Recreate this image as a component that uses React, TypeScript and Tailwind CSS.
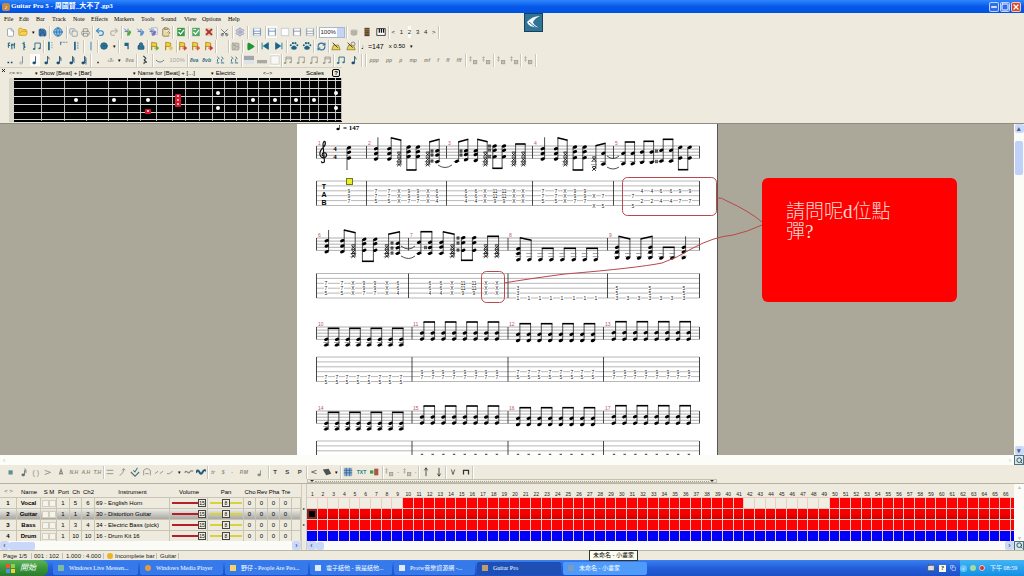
import type { ReactNode } from 'react'
import {
  CircleDot, Copy, ClipboardPaste, File, FolderOpen, Globe, Image, Keyboard, Lock, Minus, Play,
  Printer, Redo2, RefreshCw, Save, Scissors, Search, Settings, Square, Undo2, X
} from 'lucide-react'

const SANS = "font-['Liberation_Sans','Noto_Sans_CJK_TC',sans-serif]"
const SERIF = "font-['Liberation_Serif','Noto_Sans_CJK_TC',serif]"

/* ---------- toolbar glyphs, all on a 12 unit grid ---------- */

function Glyph({ children }: { children: ReactNode }) {
  return <svg viewBox="0 0 12 12" className="size-[10px]" fill="none">{children}</svg>
}

function NoteGlyph({ flags = 0, open = false, color = '#1c4a6e', small = false }: {
  flags?: number; open?: boolean; color?: string; small?: boolean
}) {
  return (
    <Glyph>
      <ellipse cx="5" cy="9.5" rx="1.8" ry="1.3" fill={open ? 'none' : color} stroke={color} strokeWidth="0.7" />
      <path d={small ? 'M6.6 9.3V4' : 'M6.6 9.3V1.5'} stroke={color} />
      {Array.from({ length: flags }, (_, i) => (
        <path key={i} d={`M6.6 ${1.8 + i * 2}q2.6 1.2 1.8 3.6`} stroke={color} strokeWidth="0.9" />
      ))}
    </Glyph>
  )
}

function BeamGlyph({ color = '#9c9a8e', double = false }: { color?: string; double?: boolean }) {
  return (
    <Glyph>
      <path d="M3.5 9.5V2.5H10V8.5" stroke={color} strokeWidth="1.1" />
      {double && <path d="M3.5 4.5H10" stroke={color} />}
      <ellipse cx="2.5" cy="9.6" rx="1.5" ry="1.1" fill={color} />
      <ellipse cx="9" cy="8.8" rx="1.5" ry="1.1" fill={color} />
    </Glyph>
  )
}

function FlagGlyph({ arrow }: { arrow?: string }) {
  return (
    <Glyph>
      <path d="M2 11V1.5L8 2.5V6.5H2z" fill="#f4d23c" stroke="#a77b12" strokeWidth="0.9" />
      {arrow && <path d="M5 8.5H9M7.5 6L10.5 8.5L7.5 11z" stroke={arrow} fill={arrow} />}
    </Glyph>
  )
}

function PageGlyph({ rows = 0, color = '#6287b3' }: { rows?: number; color?: string }) {
  return (
    <Glyph>
      <rect x="1.5" y="1.5" width="9" height="9" fill="#fff" stroke="#bfc7d0" />
      <path d="M2 2V10M10 2V10" stroke={color} />
      {rows > 0 && <path d="M2 5H10" stroke={color} />}
      {rows > 1 && <path d="M2 8H10" stroke={color} />}
    </Glyph>
  )
}

function DocGlyph({ color, cross = false }: { color: string; cross?: boolean }) {
  return (
    <Glyph>
      <rect x="1.5" y="1" width="9" height="10" fill={color} />
      {cross
        ? <path d="M2.5 2.5L9.5 9.5M9.5 2.5L2.5 9.5" stroke="#c42a20" strokeWidth="2.4" />
        : <path d="M3 6L5.5 8.5L9.5 3.5M3 3H6" stroke="#fff" strokeWidth="1.4" />}
    </Glyph>
  )
}

function GuitarGlyph({ color, sheet = false }: { color: string; sheet?: boolean }) {
  return (
    <Glyph>
      {sheet && <rect x="4" y="1" width="7" height="8" fill="#eef2f8" stroke="#8b9bb8" strokeWidth="0.7" />}
      <path d="M1.5 2L5 5.5M2 5.5h4V2" stroke="#5a7fb4" strokeWidth="1.2" />
      <path d="M5 7l3-3 2 2-2 4-3 .8z" fill={color} />
    </Glyph>
  )
}

function StaffGlyph({ variant }: { variant: number }) {
  return (
    <Glyph>
      <path d={variant === 1 ? 'M2 1V5' : 'M3.5 1V11'} stroke="#1c5f86" strokeWidth={variant === 1 ? 1 : 2} />
      {variant === 0 && <path d="M6 2H8M6 5H8M6 8H8" stroke="#8aa5b8" />}
      {variant === 1 && <path d="M2 1.5H11" stroke="#557b93" strokeDasharray="2 1" />}
      {variant === 2 && <path d="M7 1.5V10.5" stroke="#40799a" strokeDasharray="2 1" />}
    </Glyph>
  )
}

function PawGlyph() {
  return (
    <Glyph>
      <path d="M3 7.5Q6 3.5 9 7.5Q10 10.5 6 10.5Q2 10.5 3 7.5z" fill="#1b6286" />
      <circle cx="2.2" cy="5" r="1.2" fill="#1b6286" />
      <circle cx="4.7" cy="2.6" r="1.3" fill="#1b6286" />
      <circle cx="7.7" cy="2.6" r="1.3" fill="#1b6286" />
      <circle cx="10" cy="5" r="1.2" fill="#1b6286" />
    </Glyph>
  )
}

function SkipGlyph({ back = false }: { back?: boolean }) {
  return (
    <Glyph>
      <path d={back ? 'M2.5 2V10M10 2L4 6L10 10z' : 'M9.5 2V10M2 2L8 6L2 10z'} fill="#14648c" stroke="#14648c" />
    </Glyph>
  )
}

function MetronomeGlyph({ clock = false }: { clock?: boolean }) {
  return (
    <Glyph>
      <path d="M1 10.5L3 5h6l2 5.5z" fill="#ead24a" stroke="#76682a" strokeWidth="0.8" />
      <path d="M2 2L8 8" stroke="#4d4936" strokeWidth="1.2" />
      {clock && <circle cx="8.5" cy="3.5" r="2.4" fill="#dfe0d3" stroke="#6d6a58" strokeWidth="0.8" />}
    </Glyph>
  )
}

function Stems({ color = '#2b6a86' }: { color?: string }) {
  return (
    <Glyph>
      <path d="M3 2L5 5M8 2L10 5M3 5V8M8 5V8M2 9.5h3M7 9.5h4" stroke={color} strokeWidth="1.1" />
    </Glyph>
  )
}

/** strum buttons: stem at the left, boxed letter low at the right */
function StrumGlyph() {
  return (
    <Glyph>
      <path d="M3 1.5V8M1.5 3H4.5M1.5 6H4.5" stroke="#b0aea2" />
      <rect x="6.5" y="6.5" width="4" height="4" fill="#c4c2b6" stroke="#a09e92" />
    </Glyph>
  )
}

function Line({ d, color = '#8b897c', w = 1 }: { d: string; color?: string; w?: number }) {
  return <Glyph><path d={d} stroke={color} strokeWidth={w} /></Glyph>
}

function Txt({ children, tone = 'text-[#8f8d80]' }: { children: ReactNode; tone?: string }) {
  return <span className={`${tone} text-[5px] font-bold italic`}>{children}</span>
}

const caret = <span className="text-[5px] text-black">▾</span>

type Tool = [label: string, icon: ReactNode, pressed?: boolean]

function Group({ w, tools, children }: { w: string; tools?: Tool[]; children?: ReactNode }) {
  return (
    <div className={`flex h-[13px] shrink-0 items-center justify-around border-r border-[#cbc8b9] shadow-[1px_0_0_#fff] ${w}`}>
      {tools?.map(([label, icon, pressed]) => (
        <button
          key={label}
          type="button"
          title={label}
          aria-label={label}
          className={`flex h-3 items-center justify-center ${pressed ? 'bg-white/80' : ''}`}
        >
          {icon}
        </button>
      ))}
      {children}
    </div>
  )
}

const row1: [string, Tool[]][] = [
  ['w-[46px]', [
    ['New', <File size={9} fill="#fff" color="#8291a5" />],
    ['Open', <FolderOpen size={10} fill="#f7d64e" color="#c79b25" />],
    ['Recent files', caret],
    ['Save', <Save size={9} fill="#3d78b5" color="#1f4f84" />]
  ]],
  ['w-[17px]', [['Browser', <Globe size={10} fill="#8fc2e8" color="#2b70ac" />]]],
  ['w-[26px]', [
    ['Score information', <Copy size={9} color="#7f8ca0" />],
    ['Print', <Printer size={9} color="#7f807a" />]
  ]],
  ['w-[29px]', [
    ['Undo', <Undo2 size={10} color="#3e8fce" strokeWidth={3} />],
    ['Redo', <Redo2 size={10} color="#b9b8ae" strokeWidth={3} />]
  ]],
  ['w-[51px]', [
    ['Add track', <GuitarGlyph color="#4cab45" />],
    ['Track properties', <GuitarGlyph color="#5c95cf" />],
    ['Move track', <GuitarGlyph color="#7d6fbc" sheet />],
    ['Paste', <ClipboardPaste size={10} fill="#eadb9d" color="#857a54" />]
  ]],
  ['w-[16px]', [['Insert bar', <DocGlyph color="#38994a" />]]],
  ['w-[28px]', [
    ['Add bar', <DocGlyph color="#55a862" />],
    ['Delete bar', <DocGlyph color="#cdd8c4" cross />]
  ]],
  ['w-[16px]', [['Cut', <Scissors size={9} color="#4c5866" className="-rotate-90" />]]],
  ['w-[15px]', [['Preferences', <Settings size={10} fill="#c9cbe2" color="#9697ba" />]]],
  ['w-[18px]', [['Screen mode', <PageGlyph rows={2} />]]],
  ['w-[51px]', [
    ['Page', <PageGlyph rows={1} />, true],
    ['Parchment', <PageGlyph color="#d5dce4" />],
    ['Vertical', <PageGlyph rows={1} color="#7d89a0" />],
    ['Horizontal', <PageGlyph rows={2} color="#8f99ab" />]
  ]]
]

const row2: [string, Tool[]][] = [
  ['w-[40px]', [
    ['Key signature', <Line d="M2 3L5 2M2 6L5 5M3 2V8M7 3V10M10 2V9M6 5L11 4" color="#2d6b86" w={1.3} />],
    ['Clef', <Line d="M6 1V11M4 3Q8 3 6 6Q9 7 5 9" color="#2d6b86" w={1.3} />],
    ['Triplet feel', <BeamGlyph color="#2d6b86" />]
  ]],
  ['w-[40px]', [
    ['Open repeat', <StaffGlyph variant={0} />],
    ['Alternate ending', <StaffGlyph variant={1} />],
    ['Close repeat', <StaffGlyph variant={2} />]
  ]],
  ['w-[14px]', [['Double bar', <Line d="M6 1V11" color="#4d90b8" w={1.4} />]]],
  ['w-[21px]', [
    ['Coda', <CircleDot size={8} fill="#2b7496" color="#17506f" />],
    ['Direction list', caret]
  ]],
  ['w-[29px]', [
    ['Line break', <Glyph><path d="M3 2H8V10H6.5V6H3z" fill="#1c6488" /></Glyph>],
    ['Lock', <Lock size={8} fill="#2b7496" color="#17506f" />]
  ]],
  ['w-[29px]', [
    ['Insert marker', <FlagGlyph arrow="#6aa82b" />],
    ['Marker list', <FlagGlyph arrow="#e8c243" />]
  ]],
  ['w-[39px]', [
    ['First marker', <FlagGlyph arrow="#d6402a" />],
    ['Previous marker', <FlagGlyph arrow="#e0532a" />],
    ['Next marker', <FlagGlyph arrow="#c9302a" />]
  ]],
  ['w-[13px]', []],
  ['w-[14px]', [['RSE', <Image size={9} fill="#c8c6ba" color="#99978b" />]]],
  ['w-[15px]', [['Play', <Play size={9} fill="#1f9a32" color="#13801f" />]]],
  ['w-[29px]', [
    ['First bar', <SkipGlyph back />],
    ['Last bar', <SkipGlyph />]
  ]],
  ['w-[27px]', [
    ['Previous bar', <PawGlyph />],
    ['Next bar', <PawGlyph />]
  ]],
  ['w-[15px]', [['Loop', <RefreshCw size={9} color="#2a6fa0" strokeWidth={3} />]]],
  ['w-[30px]', [
    ['Metronome', <MetronomeGlyph />],
    ['Count down', <MetronomeGlyph clock />]
  ]]
]

const row3: [string, Tool[]][] = [
  ['w-[87px]', [
    ['Whole', <Line d="M3 9H5M7 9H9" color="#1c4a6e" w={1.6} />],
    ['Half', <NoteGlyph open color="#6f8798" />],
    ['Quarter', <NoteGlyph />, true],
    ['Eighth', <NoteGlyph flags={1} />],
    ['Sixteenth', <NoteGlyph flags={2} />],
    ['Thirty-second', <NoteGlyph flags={3} />],
    ['Sixty-fourth', <NoteGlyph flags={4} />]
  ]],
  ['w-[46px]', [
    ['Dotted', <Line d="M5 9H7" color="#333" w={1.6} />],
    ['Tuplet', <Txt>‹3›</Txt>],
    ['Tuplet list', caret],
    ['Octave', <Txt>8va</Txt>]
  ]],
  ['w-[16px]', [['Rest', <Line d="M4 1L7 4L5 6L8 9Q4 7 5 11" color="#2c3c48" w={1.3} />]]],
  ['w-[35px]', [
    ['Tie', <Line d="M1 6Q6 11 11 6" color="#5a6f80" />],
    ['Percent', <span className="text-[6px] text-[#a9a79b]">100%</span>]
  ]],
  ['w-[54px]', [
    ['Rhythm A', <Txt tone="text-[#2b6a86]">8va</Txt>],
    ['Rhythm B', <Txt tone="text-[#2b6a86]">8vb</Txt>],
    ['Stem up', <Stems />],
    ['Stem down', <Stems />]
  ]],
  ['w-[40px]', [
    ['Voice top', <Glyph><rect width="12" height="5" y="1" fill="#9fa6ad" /><rect width="12" height="5" y="6" fill="#dfe2e4" /></Glyph>],
    ['Voice bottom', <Glyph><rect width="12" height="4" y="6" fill="#a9a9a4" /></Glyph>],
    ['Voice none', <Glyph><rect x="1" y="1" width="10" height="10" fill="#f8f8f6" stroke="#c9c9c0" /></Glyph>, true]
  ]],
  ['w-[52px]', [
    ['Beam', <BeamGlyph double />],
    ['Unbeam', <BeamGlyph />],
    ['Split', <BeamGlyph />],
    ['Auto beam', <BeamGlyph double />]
  ]],
  ['w-[28px]', [
    ['Grace before', <BeamGlyph color="#2b6a86" />],
    ['Grace on', <NoteGlyph flags={1} />]
  ]],
  ['w-1', []],
  ['w-[100px]', ['ppp', 'pp', 'p', 'mp', 'mf', 'f', 'ff', 'fff'].map((s): Tool => [s, <Txt>{s}</Txt>])],
  ['w-[28px]', [
    ['Bass note', <StrumGlyph />],
    ['Treble note', <StrumGlyph />]
  ]],
  ['w-[27px]', [
    ['Strum down', <StrumGlyph />],
    ['Strum up', <StrumGlyph />]
  ]],
  ['w-[15px]', [['Arpeggio', <StrumGlyph />]]]
]

const effects: [string, Tool[]][] = [
  ['w-[100px]', [
    ['Dead note', <Glyph><rect x="3" y="4" width="5" height="5" fill="#5f8f96" /></Glyph>],
    ['Grace note', <NoteGlyph flags={2} color="#5d6f76" small />],
    ['Ghost note', <span className="text-[7px] text-[#8b897c]">( )</span>],
    ['Accent', <Line d="M2 4L9 6.5L2 9" />],
    ['Heavy accent', <Line d="M4 9L6 3L8 9M4.5 8H7.5" w={1.4} />],
    ['Natural harmonic', <Txt>N.H</Txt>],
    ['Artificial harmonic', <Txt>A.H</Txt>],
    ['Tapped harmonic', <Txt>T.H</Txt>]
  ]],
  ['w-[104px]', [
    ['Let ring', <Line d="M2 4H10M2 8H10" />],
    ['Bend', <Line d="M3 10Q8 8 8 2M6 4L8 2L10 4" />],
    ['Tremolo bar', <Line d="M1 6L6 11L11 6M4 4L6 6L9 1" color="#4e6e7c" w={1.3} />],
    ['Hammer on', <Line d="M2 10V4Q6 0 10 4V10M4 8H8" />],
    ['Slide', <Line d="M1 8L5 5M7 8L11 5" />],
    ['Shift slide', <Line d="M1 8H4L8 5" />],
    ['Slide list', caret],
    ['Vibrato', <Line d="M1 7Q2 4 4 6T7 6T11 5" w={1.5} />],
    ['Wide vibrato', <Line d="M0 7Q2 2 4 6T8 6T12 5" color="#215b7c" w={2.4} />]
  ]],
  ['w-[61px]', [
    ['Trill', <Txt>tr</Txt>],
    ['Tremolo picking', <Txt>$</Txt>],
    ['Speed', <Txt>-</Txt>],
    ['Palm mute', <Txt>P.M</Txt>],
    ['Staccato', <NoteGlyph color="#8b897c" small />]
  ]],
  ['w-[38px]', [
    ['Tapping', <span className="text-[6px] font-bold text-[#444]">T</span>],
    ['Slapping', <span className="text-[6px] font-bold text-[#444]">S</span>],
    ['Popping', <span className="text-[6px] font-bold text-[#444]">P</span>]
  ]],
  ['w-[34px]', [
    ['Fade in', <Line d="M9 4L3 6L9 8" color="#555" />],
    ['Wah wah', <Glyph><path d="M1 3L8 2L11 8L5 10z" fill="#4a5450" /></Glyph>],
    ['Wah list', caret]
  ]],
  ['w-[42px]', [
    ['Chord', <Glyph><rect x="1" y="1" width="10" height="10" fill="#8fb1d2" /><path d="M1 4H11M1 7H11M4 1V11M8 1V11" stroke="#2c5680" strokeWidth="0.8" /></Glyph>],
    ['Text', <span className="text-[5px] font-bold text-[#1e7f8c]">TXT</span>],
    ['Mix table', <Glyph><rect x="0" y="4" width="4" height="4" fill="#3f9b4a" /><rect x="5" y="2" width="5" height="8" fill="#a8564a" /></Glyph>]
  ]],
  ['w-[36px]', [
    ['Strum', <StrumGlyph />],
    ['Strum list', <Txt>-</Txt>],
    ['Rake', <StrumGlyph />],
    ['Rake list', <Txt>-</Txt>]
  ]],
  ['w-[27px]', [
    ['Up', <Line d="M6 11V1M4 4L6 1L8 4" color="#333" />],
    ['Down', <Line d="M6 1V11M4 8L6 11L8 8" color="#333" />]
  ]],
  ['w-[27px]', [
    ['Pick up', <Line d="M4 3L6 9L8 3" color="#444" />],
    ['Pick down', <Line d="M3 9V4H9V9" color="#333" w={1.5} />]
  ]]
]

function ToolRow({ groups, children }: { groups: [string, Tool[]][]; children?: ReactNode }) {
  return (
    <div className="flex h-[14px] items-center overflow-hidden pl-1">
      {groups.map(([w, tools], i) => <Group key={i} w={w} tools={tools} />)}
      {children}
    </div>
  )
}

/* ---------- fretboard ---------- */

const frets = [32, 55, 77, 99, 118, 131, 147, 163, 176, 190, 203, 215, 227, 238, 249, 260, 271, 281, 291, 300, 309, 318, 326, 332]
const strings = [2, 10, 18, 26, 34, 41]
const inlays = [[67, 22], [105, 22], [139, 22], [209, 15], [209, 30], [244, 22], [266, 22], [287, 22], [305, 22], [327, 15], [327, 30]]

function Fretboard() {
  return (
    <svg width="333" height="45" viewBox="0 0 333 45" className="block" aria-label="Fretboard">
      <rect width="333" height="45" fill="#000" />
      <rect width="5" height="45" fill="#d8d5c6" />
      {frets.map((x) => <path key={x} d={`M${x}.5 0V43`} stroke="#b9b9b9" />)}
      {strings.map((y) => <path key={y} d={`M0 ${y}.5H333`} stroke="#d6d6d6" />)}
      {inlays.map(([x, y]) => <circle key={`${x}-${y}`} cx={x} cy={y} r="2" fill="#fff" />)}
      {[[169, 18], [169, 22], [169, 26], [139, 33]].map(([x, y]) => (
        <g key={y}>
          <rect x={x - 3} y={y - 2} width="6" height="5" rx="1" fill="#d8182c" />
          <rect x={x - 1} y={y - 1} width="2" height="2" fill="#f6b3b3" />
        </g>
      ))}
      <path d="M0 44.5H333" stroke="#e8e5d8" />
    </svg>
  )
}

/* ---------- score ---------- */

type Stack = { ys: number[]; dead?: boolean }
type Beam = { a: number; b: number; from: Stack; to: Stack; y1: number; y2: number; down?: boolean }

const h = (...ys: number[]): Stack => ({ ys })
const m = (...ys: number[]): Stack => ({ ys, dead: true })
const pair = (a: number, from: Stack, b: number, to: Stack, y1: number, y2 = y1, down = false): Beam =>
  ({ a, b, from, to, y1, y2, down })

const chord1 = h(24.7, 29.5, 35)
const dead1 = m(30.5, 35.5, 40.5)
const chord2 = h(116.7, 122, 127.7)
const dead2 = m(123.3, 127.7, 132)

const system1: Beam[] = [
  pair(92.3, chord1, 102, dead1, 13.7, 16.3),
  pair(111.7, h(23, 27.7, 32.5), 121, h(23, 27.7, 32.5), 46, 46, true),
  pair(130.7, dead1, 140.3, h(26.7, 31, 37.7), 18, 15.3),
  pair(159.7, h(37.3), 169, h(26.7, 30.5, 35.7), 18, 15.3),
  pair(178.7, h(26.7, 30.5, 36.5), 188.3, dead1, 15.3, 17.7),
  pair(197.7, h(22, 26.3, 32.7), 207, h(22, 26.3, 32.7), 44.3, 44.3, true),
  pair(216.7, dead1, 226.3, dead1, 20),
  pair(259, chord1, 268.3, dead1, 13.7, 16.3),
  pair(278, h(23, 27.7, 33.7), 287.7, h(23, 27.7, 33.7), 46, 46, true),
  pair(297, m(35.3, 45), 306.3, h(29.3, 40), 21.7, 19.3),
  pair(326.3, h(29.3, 39.7), 335.7, h(29.3, 39.7), 18),
  pair(345, h(28, 38.3), 354.7, h(28, 38.3), 17.3),
  pair(364.3, h(26.3, 37), 374, h(26.3, 37), 15.3),
  pair(383.3, h(23.3, 34), 392.7, h(23.3, 34), 45.7, 45.7, true)
]

const system2: Beam[] = [
  pair(45.3, chord2, 56.3, dead2, 106, 108.7),
  pair(67.3, h(115.3, 119.7, 126.3), 78.3, h(115.3, 119.7, 126.3), 137.3, 137.3, true),
  pair(89.7, dead2, 100.7, h(119.3, 123.7, 129.3), 110.3, 107.7),
  pair(122, h(118.3, 129.3), 133, h(118.3, 123.5, 129.3), 107.7),
  pair(144.3, h(118.3, 123, 129.3), 155.3, dead2, 107.7, 110.3),
  pair(166.3, h(113.7, 118.7, 126.3), 177.3, h(113.7, 118.7, 126.3), 136.3, 136.3, true),
  pair(188.7, dead2, 199.7, dead2, 112.3),
  pair(221.3, h(124.7, 129.5, 135.7), 232.3, h(135.7), 113.7, 116.3),
  pair(243.3, h(135.7), 254.3, h(135.7), 124.3),
  pair(265.3, h(135.7), 276.7, h(135.7), 124.3),
  pair(287.7, h(135.7), 298.7, h(135.7), 124.3),
  pair(320, h(123.3, 128, 133.7), 331, h(134), 112.3, 115),
  pair(342, h(134), 353.3, h(123.3, 128, 133.7), 115, 112.3),
  pair(364.3, h(134), 375.3, h(134), 123.3)
]

const eighths = (x0: number, top: number, low: number, beam: number): Beam[] =>
  [0, 2, 4, 6].map((i) => pair(x0 + i * 10.7, h(top, low), x0 + (i + 1) * 10.7, h(top, low), beam))

const lowSystem = (dy: number): Beam[] => [
  ...eighths(29.3, 215.3 + dy, 220.9 + dy, 204.3 + dy),
  ...eighths(125, 209 + dy, 215 + dy, 198 + dy),
  ...eighths(221, 210.3 + dy, 216.5 + dy, 199.7 + dy),
  ...eighths(316.7, 208.7 + dy, 215.2 + dy, 197.7 + dy)
]

const DY = 84

const systems = [
  { staff: 22, tab: 57, bars: [19.5, 69.5, 149.5, 235.5, 316.5, 402.5], nums: [1, 2, 3, 4, 5], beams: system1 },
  { staff: 114, tab: 149.5, bars: [19.5, 111.5, 211, 310.5, 402.5], nums: [6, 7, 8, 9], beams: system2 },
  { staff: 203, tab: 233, bars: [19.5, 115, 211, 306.5, 402.5], nums: [10, 11, 12, 13], beams: lowSystem(0) },
  { staff: 287, tab: 317, bars: [19.5, 115, 211, 306.5, 402.5], nums: [14, 15, 16, 17], beams: lowSystem(DY) }
]

/** frets: stacked downwards from the given string line */
type Col = [x: number, line: number, frets: string[]]
const X3 = ['X', 'X', 'X']
const tab1: Col[] = [
  [52, 3, ['9', '9', '7']],
  [79, 3, ['7', '7', '5']], [92, 3, ['7', '7', '5']], [102, 3, X3], [112, 3, ['9', '9', '7']], [121, 3, ['9', '9', '7']], [131, 3, X3], [140, 3, ['6', '6', '4']],
  [169, 3, ['6', '6', '4']], [179, 3, ['6', '6', '4']], [188, 3, X3], [198, 3, ['11', '11', '9']], [207, 3, ['11', '11', '9']], [217, 3, X3], [226, 3, X3],
  [246, 3, ['7', '7', '5']], [259, 3, ['7', '7', '5']], [268, 3, X3], [278, 3, ['9', '9', '7']], [288, 3, ['9', '9', '7']],
  [297, 4, ['X', '', 'X']], [306, 4, ['7', '', '5']],
  [336, 4, ['7', '', '5']], [345, 3, ['4', '', '2']], [355, 3, ['4', '', '2']], [364, 3, ['6', '', '4']], [374, 3, ['6', '', '4']], [383, 3, ['9', '', '7']], [393, 3, ['9', '', '7']]
]
const tab2: Col[] = [
  [29, 3, ['7', '7', '5']], [45, 3, ['7', '7', '5']], [56, 3, X3], [67, 3, ['9', '9', '7']], [78, 3, ['9', '9', '7']], [90, 3, X3], [101, 3, ['6', '6', '4']],
  [133, 3, ['6', '6', '4']], [144, 3, ['6', '6', '4']], [155, 3, X3], [166, 3, ['11', '11', '9']], [177, 3, ['11', '11', '9']], [189, 3, X3], [200, 3, X3],
  [221, 4, ['3', '3', '1']], ...[232, 243, 254, 265, 277, 288, 299].map((x): Col => [x, 6, ['1']]),
  [320, 4, ['5', '5', '3']], [331, 6, ['3']], [342, 6, ['3']], [353, 4, ['5', '5', '3']], [364, 6, ['3']], [375, 6, ['3']], [387, 4, ['5', '5', '3']]
]
const run = (x0: number, line: number, f: string[]): Col[] =>
  Array.from({ length: 8 }, (_, i): Col => [Math.round(x0 + i * 10.7), line, f])
const tab3: Col[] = [
  ...run(29, 5, ['7', '5']), ...run(125, 4, ['9', '7']), ...run(221, 4, ['7', '5']), ...run(317, 4, ['9', '7'])
]

const tabs: [number, Col[]][] = [[57, tab1], [149.5, tab2], [233, tab3]]

const sharps = [
  [135, 27], [135, 31], [135, 37], [164, 27], [164, 31], [192.5, 22], [192.5, 26], [192.5, 32.5], [359.5, 27], [359.5, 37.5],
  [95, 119], [95, 124], [95, 129], [128.5, 123.5], [161, 114], [161, 119], [161, 126]
]
const ties = [
  'M141 41Q148 46 155 41', 'M310 32Q316 37 322 32', 'M310 43Q316 47 322 43',
  'M104 122Q112 128 118 122', 'M104 132Q112 137 118 132'
]

function Heads({ x, stack, bottom }: { x: number; stack: Stack; bottom: number }) {
  const ledgers = [bottom + 3.1, bottom + 6.2].filter((y) => stack.ys[stack.ys.length - 1] >= y - 0.8)
  return (
    <g>
      {ledgers.map((y) => <path key={y} d={`M${x - 3} ${y}h6`} stroke="#666" strokeWidth="0.6" />)}
      {stack.ys.map((y) => stack.dead
        ? <path key={y} d={`M${x - 1.9} ${y - 1.8}l3.8 3.6m0 -3.6l-3.8 3.6M${x - 1.6} ${y - 2.4}h3.2`} stroke="#111" strokeWidth="0.9" />
        : <ellipse key={y} cx={x} cy={y} rx="2.3" ry="1.5" transform={`rotate(-20 ${x} ${y})`} fill="#000" />)}
    </g>
  )
}

function BeamedPair({ beam, bottom }: { beam: Beam; bottom: number }) {
  const { a, b, from, to, y1, y2, down } = beam
  const off = down ? -1.9 : 1.9
  const start = (s: Stack) => (down ? s.ys[0] : s.ys[s.ys.length - 1])
  return (
    <g>
      <path d={`M${a + off} ${start(from)}V${y1}M${b + off} ${start(to)}V${y2}`} stroke="#222" strokeWidth="0.8" />
      <path d={`M${a + off - 0.4} ${y1}L${b + off + 0.4} ${y2}`} stroke="#000" strokeWidth="1.6" />
      <Heads x={a} stack={from} bottom={bottom} />
      <Heads x={b} stack={to} bottom={bottom} />
    </g>
  )
}

function Score() {
  const singles: [number, Stack, number, number][] = [
    [79, chord1, 13.3, 35], [245.7, chord1, 13.3, 35], [29.7, chord2, 106, 127], [386.7, h(123.3, 128, 133.7), 112.3, 127]
  ]
  return (
    <svg width="420" height="331" viewBox="0 0 420 331" className="block" aria-label="Score">
      <g className={SERIF} fontSize="7" fontWeight="700">
        <text x="46" y="6">= 147</text>
      </g>
      <ellipse cx="41" cy="5" rx="1.6" ry="1.2" />
      <path d="M42.5 5V1" stroke="#222" strokeWidth="0.7" />
      {systems.map(({ staff, tab, bars, nums, beams }) => (
        <g key={staff}>
          {[0, 1, 2, 3, 4].map((i) => (
            <path key={i} d={`M19.5 ${staff + i * 3.1}H402.5`} stroke="#777" strokeWidth="0.6" />
          ))}
          {[0, 1, 2, 3, 4, 5].map((i) => (
            <path key={i} d={`M19.5 ${tab + i * 4.9}H402.5`} stroke="#888" strokeWidth="0.6" />
          ))}
          {bars.map((x) => (
            <path key={x} d={`M${x} ${staff}v12.4M${x} ${tab}v24.5`} stroke="#333" strokeWidth="0.9" />
          ))}
          {nums.map((n, i) => (
            <text key={n} x={Math.round(bars[i]) + 1} y={staff - 1} fontSize="5" fill="#c4545c" className={SANS}>{n}</text>
          ))}
          {beams.map((beam) => <BeamedPair key={beam.a} beam={beam} bottom={staff + 12.4} />)}
        </g>
      ))}
      {singles.map(([x, s, top, low]) => (
        <g key={x}>
          <path d={`M${x + 1.9} ${low}V${top}`} stroke="#222" strokeWidth="0.8" />
          <Heads x={x} stack={s} bottom={low + 2} />
        </g>
      ))}
      <path d="M50 24V46" stroke="#222" strokeWidth="0.8" />
      <Heads x={52} stack={h(23.7, 28.3, 34)} bottom={34} />
      {sharps.map(([x, y]) => (
        <path key={`${x}-${y}`} d={`M${x - 0.7} ${y - 1.8}v3.6M${x + 0.7} ${y - 1.8}v3.6M${x - 1.6} ${y - 0.6}h3.2M${x - 1.6} ${y + 0.8}h3.2`} stroke="#111" strokeWidth="0.6" />
      ))}
      {ties.map((d) => <path key={d} d={d} stroke="#222" strokeWidth="0.8" fill="none" />)}
      {/* treble clef */}
      <path d="M26 38.5q-1.5 .5 -1.5 -1.2M25 38.5q2.8 .6 2.4 -2L26 20.5q.2 -3.5 2 -3q1.2 2.4 -1.2 5.4q-4.6 4 -3.8 8q1.2 3.6 4.8 2.8q3 -1.8 1 -4.6q-2.6 -1.6 -3.6 1q-.2 1.8 1.2 2.2" fill="none" stroke="#111" strokeWidth="1.2" />
      <g className={SERIF} fontSize="7" fontWeight="700" textAnchor="middle">
        <text x="38" y="27">4</text>
        <text x="38" y="35">4</text>
      </g>
      <g className={SANS} fontSize="7" fontWeight="700" textAnchor="middle">
        <text x="27" y="65">T</text>
        <text x="27" y="73">A</text>
        <text x="27" y="81">B</text>
      </g>
      <g className={SANS} fontSize="5" fill="#222" textAnchor="middle">
        {tabs.map(([top, cols]) => cols.map(([x, line, frets]) => frets.map((f, i) => {
          const y = Math.round(top + (line - 1 + i) * 4.9)
          return f && (
            <g key={`${x}-${y}`}>
              <rect x={x - 2} y={y - 2} width="4" height="4" fill="#fff" />
              <text x={x} y={y + 2}>{f}</text>
            </g>
          )
        })))}
      </g>
      {/* last tab staff runs off the bottom of the view */}
      {[125, 221, 317].flatMap((x0) => [0, 1, 2, 3, 4, 5, 6, 7].map((i) => (
        <path key={x0 + i} d={`M${x0 + i * 10.7 - 1.2} 330.3h2.4`} stroke="#333" strokeWidth="1" />
      )))}
      <rect x="49.5" y="54.5" width="6" height="6" fill="#e8ee2a" stroke="#77781a" />
    </svg>
  )
}

function Annotations() {
  return (
    <>
      <svg width="470" height="190" viewBox="0 0 470 190" className="absolute left-0 top-0" fill="none" stroke="#b8484c">
        <rect x="325.5" y="53.5" width="94" height="38" rx="5" />
        <rect x="184.5" y="147.5" width="23" height="31" rx="5" />
        <path d="M420 74Q424 73 430 77Q452 87 465 98" />
        <path d="M207 159Q230 155 268 150Q340 144 365 139Q380 134 396 124Q416 113 436 111Q450 108 465 101" />
      </svg>
      <p className={`absolute left-[465px] top-[54px] h-[124px] w-[195px] rounded-md bg-[#fe0000] pl-6 pr-12 pt-6 text-[19px] font-light leading-[20px] text-[#ffd9d0] ${SERIF}`}>
        請問呢d位點彈?
      </p>
    </>
  )
}

/* ---------- track list and bar grid ---------- */

const tracks = [
  { name: 'Vocal', ch: 5, ch2: 6, inst: '69 - English Horn', vol: 15 },
  { name: 'Guitar', ch: 1, ch2: 2, inst: '30 - Distortion Guitar', vol: 15 },
  { name: 'Bass', ch: 3, ch2: 4, inst: '34 - Electric Bass (pick)', vol: 15 },
  { name: 'Drum', ch: 10, ch2: 10, inst: '16 - Drum Kit 16', vol: 15 }
]

const THUMB = '[&::-webkit-slider-thumb]:h-2 [&::-webkit-slider-thumb]:w-2 [&::-webkit-slider-thumb]:appearance-none [&::-webkit-slider-thumb]:border [&::-webkit-slider-thumb]:border-[#444] [&::-webkit-slider-thumb]:bg-[#f1eee2]'

function Slider({ label, value, max, track, mark }: { label: string; value: number; max: number; track: string; mark: string }) {
  return (
    <span className="relative flex h-[10px] items-center pl-[2px] pr-px">
      <input type="range" aria-label={label} defaultValue={value} max={max} className={`h-[2px] w-full appearance-none ${track} ${THUMB}`} />
      <span className={`pointer-events-none absolute ${mark} w-2 text-center text-[5px] text-black`}>{value}</span>
    </span>
  )
}

const heads = ['Name', 'S M', 'Port', 'Ch', 'Ch2', 'Instrument', 'Volume', 'Pan', 'Cho', 'Rev', 'Pha', 'Tre']

function TrackTable() {
  return (
    <table className="w-[301px] table-fixed border-separate border-spacing-0 text-center text-[6px] leading-[10px] text-black">
      <colgroup>
        <col className="w-[17px]" /><col className="w-[24px]" /><col className="w-[16px]" /><col className="w-[13px]" />
        <col className="w-[12px]" /><col className="w-[13px]" /><col className="w-[75px]" /><col className="w-[38px]" />
        <col className="w-[36px]" /><col className="w-[12px]" /><col className="w-[12px]" /><col className="w-[12px]" />
        <col className="w-[12px]" /><col />
      </colgroup>
      <thead>
        <tr className="h-[13px]">
          <th className="p-0 font-normal text-[#666]">{'<  >'}</th>
          {heads.map((t) => <th key={t} className="whitespace-nowrap p-0 pt-[2px] font-normal">{t}</th>)}
          <th className="p-0" />
        </tr>
      </thead>
      <tbody>
        {tracks.map((t, i) => (
          <tr
            key={t.name}
            className={`h-[11px] *:overflow-hidden *:whitespace-nowrap *:border-r *:border-t *:border-[#c9c5b4] *:p-0 ${i === 1 ? 'bg-linear-to-b from-[#f4f3ee] to-[#a9a8a3]' : ''}`}
          >
            <td className="font-bold">{i + 1}</td>
            <td className="font-bold">{t.name}</td>
            <td>
              <span className="flex justify-center">
                <input type="checkbox" aria-label={`Solo ${t.name}`} className="size-[7px] appearance-none border border-[#d2cfc0] bg-[#f6f4ea]" />
                <input type="checkbox" aria-label={`Mute ${t.name}`} className="size-[7px] appearance-none border border-[#d2cfc0] bg-[#f6f4ea]" />
              </span>
            </td>
            <td>1</td>
            <td>{t.ch}</td>
            <td>{t.ch2}</td>
            <td className="text-left indent-[1px]">{t.inst}</td>
            <td><Slider label={`${t.name} volume`} value={t.vol} max={15} track="bg-[#b3202a]" mark="right-px" /></td>
            <td><Slider label={`${t.name} pan`} value={8} max={16} track="bg-[#d8d23c]" mark="left-[14px]" /></td>
            <td>0</td><td>0</td><td>0</td><td>0</td><td />
          </tr>
        ))}
      </tbody>
    </table>
  )
}

const bars = Array.from({ length: 67 }, (_, i) => i + 1)
const vocalRests = (n: number) => n <= 9 || (n >= 42 && n <= 49)

function cellTone(track: number, n: number): string {
  if (track === 1 && n === 1) return 'border-2 border-[#8a2020] bg-black'
  if (track === 0 && vocalRests(n)) return 'bg-[#f0eee2]'
  if (track === 1) return 'bg-linear-to-b from-[#f80000] from-50% to-[#cc0000]'
  return track === 3 ? 'bg-[#0000fa]' : 'bg-[#fc0202]'
}

function BarGrid() {
  return (
    <div className="min-w-0 flex-1 overflow-hidden">
      <div className="grid h-[13px] grid-cols-[repeat(66,minmax(0,1fr))_3px] items-end overflow-hidden text-center text-[5px] leading-[6px] text-[#222]">
        {bars.map((n) => <span key={n}>{n < 67 && n}</span>)}
      </div>
      {tracks.map((t, i) => (
        <div key={t.name} className="grid h-[11px] grid-cols-[repeat(66,minmax(0,1fr))_3px] border-t border-[#e9c9c0]">
          {bars.map((n) => (
            <span key={n} className="border-r border-[#e6cfc6] last:border-r-0">
              <span className={`block h-[10px] ${cellTone(i, n)}`} />
            </span>
          ))}
        </div>
      ))}
    </div>
  )
}

function ScrollButton({ children, label }: { children: ReactNode; label: string }) {
  return (
    <button type="button" aria-label={label} className="flex size-[9px] shrink-0 items-center justify-center rounded-xs bg-[#ccd8f8] text-[7px] font-bold leading-none text-[#4d6185]">
      {children}
    </button>
  )
}

function ZoomCorner() {
  return (
    <span className="flex size-[10px] shrink-0 items-center justify-center border border-[#4b7382] bg-[#dce6e4]">
      <Search size={7} color="#1f4a5a" strokeWidth={3} />
    </span>
  )
}

/* ---------- taskbar ---------- */

const tasks: { text: string; w: string; dot: string; tone: string; tip?: string }[] = [
  { text: 'Windows Live Messen...', w: 'w-[85px]', dot: 'bg-[#7fb8a0]', tone: 'bg-[#3579ea]' },
  { text: 'Windows Media Player', w: 'w-[83px]', dot: 'bg-[#e79a3a] rounded-full', tone: 'bg-[#3579ea]' },
  { text: '野仔 - People Are Peo...', w: 'w-[83px]', dot: 'bg-[#f5d368]', tone: 'bg-[#3579ea]' },
  { text: '電子結他 - 我是結他...', w: 'w-[82px]', dot: 'bg-[#dfe9fb]', tone: 'bg-[#3579ea]' },
  { text: 'Protw音樂資源網 -...', w: 'w-[81px]', dot: 'bg-[#dfe9fb]', tone: 'bg-[#3579ea]' },
  { text: 'Guitar Pro', w: 'w-[84px]', dot: 'bg-[#c09a72]', tone: 'bg-[#1e4fb5]' },
  { text: '未命名 - 小畫家', w: 'w-[84px]', dot: 'bg-[#7a9cc4]', tone: 'bg-[#4f9bfa]', tip: '未命名 - 小畫家' }
]

function Taskbar() {
  return (
    <footer className={`flex h-4 shrink-0 items-center bg-linear-to-b from-[#3a80f0] via-[#245edb] to-[#1d50c6] text-[6px] text-white ${SERIF}`}>
      <button type="button" className="flex h-4 w-[48px] items-center gap-[5px] rounded-r-md bg-linear-to-b from-[#5cb35a] via-[#3a963a] to-[#2c7a2e] pl-[6px] text-[8px] italic">
        <span className="grid grid-cols-2 gap-px">
          <i className="size-1 bg-[#f0552c]" /><i className="size-1 bg-[#8fd148]" />
          <i className="size-1 bg-[#4f8df0]" /><i className="size-1 bg-[#f7cf3c]" />
        </span>
        開始
      </button>
      <nav className="flex flex-1 gap-[2px] pl-[5px]" aria-label="Tasks">
        {tasks.map((t) => (
          <div key={t.text} className={`relative ${t.w}`}>
            <button type="button" className={`flex h-[13px] w-full items-center gap-[5px] overflow-hidden whitespace-nowrap rounded-xs pl-[5px] ${t.tone}`}>
              <i className={`size-[6px] shrink-0 ${t.dot}`} />
              {t.text}
            </button>
            {t.tip && (
              <span role="tooltip" className="absolute -top-[12px] left-[26px] whitespace-nowrap border border-[#333] bg-[#fffff0] px-[3px] leading-[9px] text-black">
                {t.tip}
              </span>
            )}
          </div>
        ))}
      </nav>
      <div className="flex items-center gap-1 pr-1">
        <Keyboard size={8} fill="#ddd" color="#444" />
        <span className="bg-[#fffbe0] px-[2px] text-[6px] font-bold leading-[7px] text-black">?</span>
        <Copy size={6} />
      </div>
      <div className="flex h-4 w-[64px] items-center gap-[3px] bg-linear-to-b from-[#3fb4f5] to-[#128ee4]">
        <span className="size-[7px] rounded-full bg-[#64c4f8] text-center text-[7px] leading-[6px]">‹</span>
        <i className="size-[6px] rounded-full bg-[#a6dba0]" />
        <i className="size-[6px] rounded-full border border-[#f2c8c8] bg-[#c23a3a]" />
        <time className="pl-[2px] text-[6px]">下午 08:59</time>
      </div>
    </footer>
  )
}

/* ---------- window ---------- */

const menus: [string, string][] = [
  ['File', 'w-[15px]'], ['Edit', 'w-[17px]'], ['Bar', 'w-[16px]'], ['Track', 'w-[21px]'], ['Note', 'w-[18px]'],
  ['Effects', 'w-[23px]'], ['Markers', 'w-[27px]'], ['Tools', 'w-[20px]'], ['Sound', 'w-[23px]'], ['View', 'w-[18px]'],
  ['Options', 'w-[26px]'], ['Help', 'w-[16px]']
]

export default function App() {
  return (
    <div className={`relative flex h-screen w-full flex-col overflow-hidden bg-[#eeebde] text-[6px] leading-none text-[#222] ${SANS}`}>
      <header className={`flex h-[13px] shrink-0 items-center bg-linear-to-b from-[#2f86fb] via-[#0759ea] to-[#0052df] pl-[2px] pr-[3px] text-[7px] font-bold text-white ${SERIF}`}>
        <span className="mr-px flex size-2 items-center justify-center rounded-xs bg-[#c08a4c] text-[6px]">♪</span>
        <h1 className="flex-1">Guitar Pro 5 - 周國賢_大不了.gp3</h1>
        <div className="flex gap-px">
          <button type="button" aria-label="Minimize" className="rounded-xs border border-white/70 bg-[#2f6df0]"><Minus size={8} strokeWidth={4} /></button>
          <button type="button" aria-label="Restore" className="rounded-xs border border-white/70 bg-[#2f6df0]"><Square size={8} strokeWidth={3} /></button>
          <button type="button" aria-label="Close" className="rounded-xs border border-white/70 bg-[#d9492a]"><X size={8} strokeWidth={4} /></button>
        </div>
      </header>

      <nav className={`flex h-3 shrink-0 items-center pl-1 text-[6px] text-black ${SERIF}`}>
        {menus.map(([name, w]) => <button key={name} type="button" className={`text-left ${w}`}>{name}</button>)}
      </nav>

      {/* floating recorder logo */}
      <svg viewBox="0 0 19 19" className="absolute left-[524px] top-[13px] size-[19px]">
        <rect x="0.5" y="0.5" width="18" height="18" fill="#2f7396" stroke="#1b3f58" />
        <path d="M16 3Q8 3 3 9Q4 14 14 14.5Q9 11 9 9Q11 5 16 3z" fill="#f2f8fb" />
        <path d="M5 9Q8 12 13 15" stroke="#2f7396" fill="none" />
      </svg>

      <section className="h-[42px] shrink-0" aria-label="Toolbars">
        <ToolRow groups={row1}>
          <Group w="w-[30px]">
            <select aria-label="Zoom" defaultValue="100%" className="h-[11px] w-[26px] appearance-none border border-[#a9b8cc] bg-[linear-gradient(to_left,#c5d3f5_7px,#fff_7px)] pl-px text-[6px]">
              <option>100%</option>
            </select>
          </Group>
          <Group w="w-[42px]" tools={[
            ['Mixer', <Glyph><ellipse cx="6" cy="4" rx="4" ry="2" fill="#d9d7cc" /><path d="M2 4V9Q6 12 10 9V4" fill="#b5b3a8" /></Glyph>],
            ['Fretboard', <Glyph><rect x="3" y="1" width="6" height="10" fill="#5d452b" /><path d="M3 3H9M3 5H9M3 8H9" stroke="#b99a66" strokeWidth="0.6" /></Glyph>],
            ['Keyboard', <Glyph><rect x="1" y="2" width="10" height="8" fill="#fff" stroke="#222" /><path d="M4 2V7M6.5 2V7M9 2V7" stroke="#111" strokeWidth="1.5" /></Glyph>]
          ]} />
          <Group w="w-[50px]" tools={['<', '1', '2', '3', '4', '>'].map((s): Tool => [`Window ${s}`, <span className="text-[6px]">{s}</span>, s === '2'])} />
        </ToolRow>
        <ToolRow groups={row2}>
          <div className="flex items-center gap-[5px] pl-[2px] text-black">
            <span className="text-[7px]">♩=147</span>
            <span className="text-[6px]">x 0.50</span>
            {caret}
          </div>
        </ToolRow>
        <ToolRow groups={row3} />
      </section>

      <section className="h-[56px] w-[342px] shrink-0 border-t border-[#d4d0c0] pl-[9px]" aria-label="Fretboard panel">
        <div className="relative flex h-[10px] items-center whitespace-nowrap text-[6px] text-black">
          <button type="button" aria-label="Close fretboard" className="absolute -left-2 top-0"><X size={5} strokeWidth={4} /></button>
          <span className="w-[26px] text-[5px] text-[#555]">&lt;= =&gt;</span>
          <button type="button" className="w-[98px] text-left"><span className="text-[5px]">▾</span> Show [Beat] + [Bar]</button>
          <button type="button" className="w-[78px] text-left"><span className="text-[5px]">▾</span> Name for [Beat] + [...]</button>
          <button type="button" className="w-[52px] text-left"><span className="text-[5px]">▾</span> Electric</button>
          <span className="w-[43px] text-[5px]">&lt;--&gt;</span>
          <button type="button" className="w-[26px] text-left">Scales</button>
          <button type="button" aria-label="Help" className="size-[8px] rounded-xs border border-black text-[6px] font-bold leading-[6px]">?</button>
        </div>
        <Fretboard />
      </section>

      <main className="flex min-h-0 flex-1 border-t border-[#8f8c80]">
        <div className="flex min-w-0 flex-1 justify-center overflow-hidden bg-[#aca899]">
          <div className="relative w-[420px] shrink-0 bg-white shadow-[1px_0_0_#555]">
            <Score />
            <Annotations />
          </div>
        </div>
        <div className="flex w-[10px] shrink-0 flex-col items-center bg-[#fbfbf8]">
          <ScrollButton label="Scroll up">▴</ScrollButton>
          <span className="mt-2 h-[34px] w-2 rounded-xs bg-[#bfd0f9]" />
          <span className="flex-1" />
          <ScrollButton label="Scroll down">▾</ScrollButton>
        </div>
      </main>

      <div className="flex h-[10px] shrink-0 items-center justify-between bg-[#fcfcf9]">
        <span className="pl-[3px] text-[7px] text-[#c6c4b8]">‹</span>
        <span className="flex items-center gap-[3px] text-[7px] text-[#c6c4b8]">›<ZoomCorner /></span>
      </div>

      <section className="h-[19px] shrink-0 border-b border-[#b5b2a2]" aria-label="Note effects">
        <ToolRow groups={effects} />
        <div className="ml-[307px] flex h-1 w-[410px] items-center justify-between border border-[#c3c0b0] px-[2px]">
          <svg viewBox="0 0 4 2" className="h-[2px] w-1"><path d="M0 0H4L2 2z" fill="#333" /></svg>
          <span className="mx-px h-px flex-1 border-t border-dotted border-[#a3a193]" />
          <svg viewBox="0 0 4 2" className="h-[2px] w-1"><path d="M0 0H4L2 2z" fill="#333" /></svg>
        </div>
      </section>

      <section className="flex h-[66px] shrink-0" aria-label="Tracks">
        <div className="w-[301px] shrink-0">
          <TrackTable />
          <div className="flex h-[9px] items-center bg-[#fbfbf8]">
            <ScrollButton label="Tracks left">‹</ScrollButton>
            <span className="h-2 w-[26px] rounded-xs bg-[#c9d7fb]" />
            <span className="flex-1" />
            <ScrollButton label="Tracks right">›</ScrollButton>
          </div>
        </div>
        <div className="flex w-[6px] shrink-0 flex-col items-center justify-center border-x border-[#cfccbc] text-[4px]">
          <span>▸</span><span className="h-3" /><span>▸</span>
        </div>
        <div className="flex min-w-0 flex-1 flex-col">
          <div className="flex">
            <BarGrid />
            <div className="flex w-[10px] flex-col items-center justify-between bg-[#fbfbf8] text-[6px] text-[#c4c2b4]">
              <span>▴</span><span>▾</span>
            </div>
          </div>
          <div className="flex h-[9px] items-center bg-[#fbfbf8]">
            <ScrollButton label="Bars left">‹</ScrollButton>
            <span className="h-2 w-2 rounded-xs bg-[#c9d7fb]" />
            <span className="flex-1" />
            <ScrollButton label="Bars right">›</ScrollButton>
            <ZoomCorner />
          </div>
        </div>
      </section>

      <section className="flex h-[10px] shrink-0 items-center border-t border-[#b9b6a6] pl-[3px] text-[6px] *:border-r *:border-[#c3c0b0]" aria-label="Status">
        <span className="w-[29px]">Page 1/5</span>
        <span className="w-[31px] pl-[2px]">001 : 102</span>
        <span className="w-[41px] pl-[3px]">1.000 : 4.000</span>
        <span className="flex w-[53px] items-center gap-[2px] whitespace-nowrap pl-[3px]">
          <i className="size-[6px] shrink-0 rounded-full bg-[#e9b526]" />Incomplete bar
        </span>
        <span className="w-[22px] pl-[3px]">Guitar</span>
      </section>

      <Taskbar />
    </div>
  )
}
